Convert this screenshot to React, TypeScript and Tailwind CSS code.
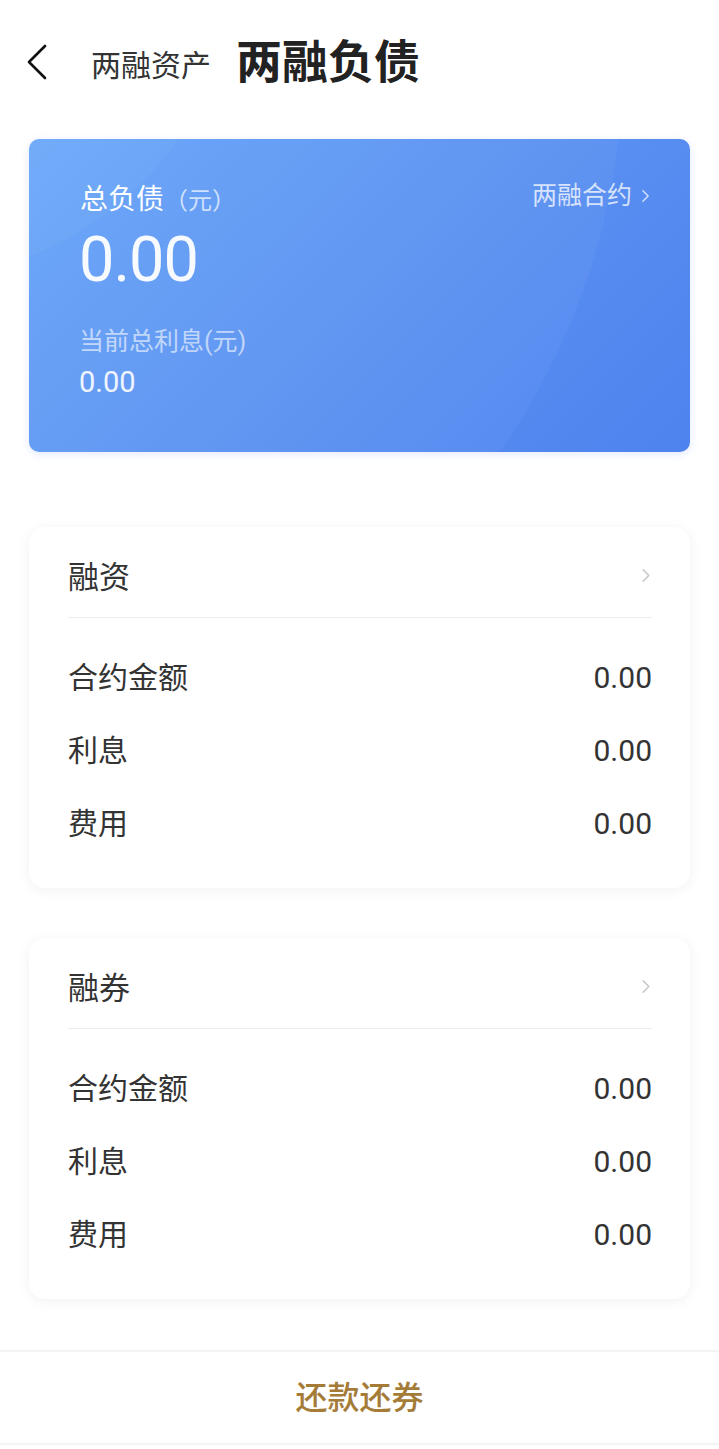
import React from "react";

const font = { fontFamily: "Roboto, 'Noto Sans CJK SC', sans-serif" };

function Chevron({ className }: { className?: string }) {
  return (
    <svg viewBox="0 0 10 16" className={className} fill="none" stroke="currentColor" strokeWidth="1.6" strokeLinecap="round" strokeLinejoin="round">
      <polyline points="2,2 8,8 2,14" />
    </svg>
  );
}

function Section({ title }: { title: string }) {
  const rows = [
    ["合约金额", "0.00"],
    ["利息", "0.00"],
    ["费用", "0.00"],
  ];
  return (
    <div className="mx-[29px] h-[361px] rounded-[16px] bg-white shadow-[0_2px_14px_rgba(0,0,0,0.06)] px-[39px] pr-[38px]">
      <div className="h-[91px] pt-[11px] flex items-center justify-between border-b border-[#ececec]">
        <span className="text-[31px] leading-[40px] text-[#333]">{title}</span>
        <Chevron className="w-[10px] h-[15px] text-[#c8c8c8] mr-[1px] -mt-[4px]" />
      </div>
      <div className="pt-[23px]">
        {rows.map(([k, v]) => (
          <div key={k} className="h-[73px] flex items-center justify-between">
            <span className="text-[30px] text-[#333]">{k}</span>
            <span className="text-[30px] text-[#333]">{v}</span>
          </div>
        ))}
      </div>
    </div>
  );
}

export default function App() {
  return (
    <div className="w-[719px] h-[1449px] bg-white relative overflow-hidden" style={font}>
      {/* Header */}
      <div className="h-[124px] flex items-center">
        <div className="w-[92px] flex items-center pl-[26px]">
          <svg viewBox="0 0 22 36" className="w-[22px] h-[36px] text-[#111]" fill="none" stroke="currentColor" strokeWidth="2.6" strokeLinecap="round" strokeLinejoin="round">
            <polyline points="19,2 3,18 19,34" />
          </svg>
        </div>
        <span className="text-[30px] text-[#333] leading-none mt-[8px] -ml-[1px]">两融资产</span>
        <span className="ml-[25px] text-[46px] font-bold text-[#222] leading-none">两融负债</span>
      </div>

      {/* Summary card */}
      <div className="mx-[29px] mt-[15px] h-[313px] rounded-[10px] relative overflow-hidden bg-[linear-gradient(135deg,#68a6f9_0%,#5d94f2_45%,#4e82ee_100%)] shadow-[0_2px_8px_rgba(60,110,230,0.15)]">
        <div className="absolute -left-[768px] -top-[759px] w-[1362px] h-[1362px] rounded-full bg-white/[0.035]" />
        <div className="absolute -left-[450px] -top-[520px] w-[660px] h-[660px] rounded-full bg-white/[0.035]" />
        <div className="relative px-[51px] pr-[40px]">
          <div className="pt-[43px] h-[79px] flex items-start justify-between">
            <div className="leading-[36px] text-white">
              <span className="text-[28px]">总负债</span>
              <span className="text-[24px] text-white/70">（元）</span>
            </div>
            <div className="flex items-center text-white/75 leading-[30px] mt-[-1px]">
              <span className="text-[25px]">两融合约</span>
              <Chevron className="ml-[9px] w-[9px] h-[14px]" />
            </div>
          </div>
          <div className="mt-[10px] text-[63px] leading-[64px] text-white/95 tracking-[-1px] -ml-[1px]">0.00</div>
          <div className="mt-[34px] text-[25px] leading-[32px] text-white/60 -ml-[1px]">当前总利息(元)</div>
          <div className="mt-[8px] text-[29px] leading-[32px] text-white/90 -ml-[1px]">0.00</div>
        </div>
      </div>

      <div className="h-[75px]" />
      <Section title="融资" />
      <div className="h-[50px]" />
      <Section title="融券" />

      {/* Bottom bar */}
      <div className="mt-[51px] h-[95px] border-t-2 border-b-2 border-[#f4f4f4] flex items-center justify-center">
        <span className="text-[32px] text-[#a47b37] font-medium">还款还券</span>
      </div>
    </div>
  );
}
